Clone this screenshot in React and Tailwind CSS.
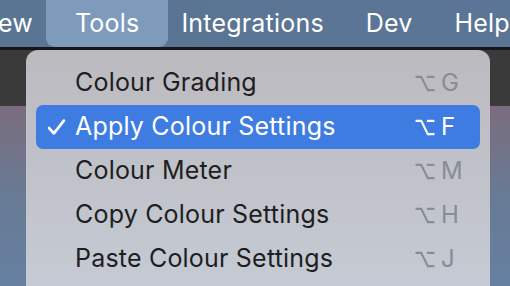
import React from 'react';

// macOS style menu: Tools dropdown open
const menuItems = [
  { label: 'Colour Grading', key: 'G' },
  { label: 'Apply Colour Settings', key: 'F', checked: true },
  { label: 'Colour Meter', key: 'M' },
  { label: 'Copy Colour Settings', key: 'H' },
  { label: 'Paste Colour Settings', key: 'J' },
];

const OptionKey = ({ className = '' }) => (
  <svg viewBox="0 0 20 18" className={className} fill="none" stroke="currentColor" strokeWidth="2.3" strokeLinecap="butt">
    <path d="M0 2 H6 L13 16 H20" />
    <path d="M12 2 H20" />
  </svg>
);

const Check = () => (
  <svg viewBox="0 0 18 16" className="w-[19px] h-[18px]" fill="none" stroke="currentColor" strokeWidth="2.6" strokeLinecap="round" strokeLinejoin="round">
    <path d="M2 9 L6.5 14 L16 2" />
  </svg>
);

export default function App() {
  return (
    <div
      className="relative w-[510px] h-[286px] overflow-hidden bg-[#3a3a3b]"
      style={{ fontFamily: 'Inter, "Noto Sans", sans-serif' }}
    >
      {/* menu bar */}
      <div className="h-[47px] flex items-stretch bg-gradient-to-r from-[#5a7493] to-[#5a7596] text-white text-[25px] tracking-[0.2px] whitespace-nowrap">
        <div className="flex items-center mr-[13px] -ml-[2px]">ew</div>
        <div className="flex items-center px-[29px] bg-[#7e9bbc] rounded-b-[9px]">Tools</div>
        <div className="flex items-center ml-[13px]">Integrations</div>
        <div className="flex items-center ml-[42px]">Dev</div>
        <div className="flex items-center ml-[42px]">Help</div>
      </div>
      <div className="h-[3px] bg-[#161616]" />

      {/* desktop behind */}
      <div className="h-[56px] bg-[#3a3a3b]" />
      <div className="h-[180px] bg-gradient-to-b from-[#7b6c7d] via-[#687a95] to-[#6580a0]" />

      {/* dropdown */}
      <div className="absolute left-[26px] top-[50px] w-[464px] h-[250px] rounded-t-[12px] bg-gradient-to-b from-[#bcbabf] to-[#c5cbd5] pt-[11px] px-[10px]">
        {menuItems.map((item) => (
          <div
            key={item.label}
            className={
              'h-[44px] flex items-center rounded-[7px] ' +
              (item.checked ? 'bg-[#3e7ce2] text-white' : 'text-[#1e1e1f]')
            }
          >
            <div className="w-[39px] flex justify-center pl-[2px]">
              {item.checked && <Check />}
            </div>
            <div className="flex-1 text-[25px] tracking-[0.2px] whitespace-nowrap">{item.label}</div>
            <div className={'flex items-center w-[65px] ' + (item.checked ? 'text-white' : 'text-[#878c95]')}>
              <OptionKey className="w-[20px] h-[17px]" />
              <span className="ml-[6px] text-[24px]">{item.key}</span>
            </div>
          </div>
        ))}
      </div>
    </div>
  );
}
